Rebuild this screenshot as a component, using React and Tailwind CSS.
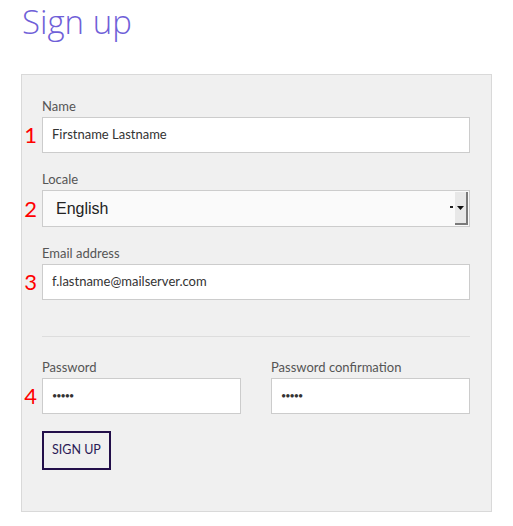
import React from "react";

const body = { fontFamily: "Lato, 'Open Sans', 'Liberation Sans', sans-serif" };

function Marker({ n }) {
  return (
    <span className="absolute right-full mr-[5px] top-1/2 -translate-y-1/2 text-[22px] leading-none text-[#ff0000]">
      {n}
    </span>
  );
}

function Field({ label, n, children, className = "" }) {
  return (
    <div className={className}>
      <label className="block text-[13px] leading-4 text-[#555] mb-[3px]">{label}</label>
      <div className="relative">
        {n && <Marker n={n} />}
        {children}
      </div>
    </div>
  );
}

function TextBox({ value, dots }) {
  return (
    <div className="h-9 bg-white border border-[#cccccc] flex items-center px-[9px]">
      {dots ? (
        <span className="text-[9px] tracking-[-1px] text-[#333]">•••••</span>
      ) : (
        <span className="text-[13px] text-[#333]">{value}</span>
      )}
    </div>
  );
}

function SelectBox() {
  return (
    <div className="h-[37px] bg-[#fafafa] border border-[#cccccc] flex items-center pl-[13px] pr-px">
      <span className="flex-1 text-[16px] text-[#222]" style={{ fontFamily: "'Liberation Sans', Arial, sans-serif" }}>
        English
      </span>
      <span className="w-[3px] h-[2px] bg-[#222] mr-[2px] -mt-[4px]" />
      <div className="w-[13px] h-[33px] bg-[#e8e8e8] border-r-2 border-b-2 border-[#7a7a7a] flex items-center justify-center">
        <svg width="7" height="4" viewBox="0 0 7 4">
          <path d="M0 0H7L3.5 4Z" fill="#111" />
        </svg>
      </div>
    </div>
  );
}

export default function App() {
  return (
    <div className="min-h-[526px] bg-white pl-[21px]" style={body}>
      <h1
        className="text-[33px] leading-[44px] font-light text-[#6f60d8] pl-px"
        style={{ fontFamily: "'Open Sans', Lato, sans-serif", fontWeight: 300 }}
      >
        Sign up
      </h1>
      <div className="mt-[30px] w-[471px] bg-[#f0f0f0] border border-[#d9d9d9] pt-[23px] pl-5 pr-[21px] pb-[41px]">
        <Field label="Name" n="1">
          <TextBox value="Firstname Lastname" />
        </Field>
        <Field label="Locale" n="2" className="mt-[18px]">
          <SelectBox />
        </Field>
        <Field label="Email address" n="3" className="mt-[18px]">
          <TextBox value="f.lastname@mailserver.com" />
        </Field>
        <div className="mt-9 h-px bg-[#dddddd]" />
        <div className="mt-[22px] grid grid-cols-2 gap-[30px]">
          <Field label="Password" n="4">
            <TextBox dots />
          </Field>
          <Field label="Password confirmation">
            <TextBox dots />
          </Field>
        </div>
        <button className="mt-[17px] h-[39px] px-[8px] border-2 border-[#230f4a] text-[12.5px] text-[#2a1a55] bg-transparent">
          SIGN UP
        </button>
      </div>
    </div>
  );
}
